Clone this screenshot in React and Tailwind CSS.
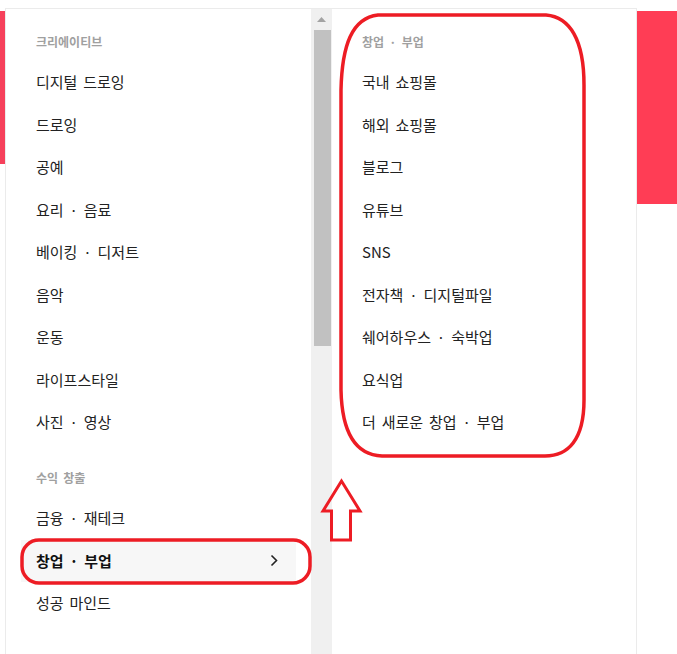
import React from 'react';

const creative = ['디지털 드로잉', '드로잉', '공예', '요리 · 음료', '베이킹 · 디저트', '음악', '운동', '라이프스타일', '사진 · 영상'];
const income = ['금융 · 재테크', '창업 · 부업', '성공 마인드'];
const sideJobs = ['국내 쇼핑몰', '해외 쇼핑몰', '블로그', '유튜브', 'SNS', '전자책 · 디지털파일', '쉐어하우스 · 숙박업', '요식업', '더 새로운 창업 · 부업'];

const GroupTitle = ({ children, className = '' }) => (
  <div className={`h-[18px] flex items-center px-[30px] text-[12px] font-bold text-[#a0a0a0] ${className}`}>{children}</div>
);

const Item = ({ label, active }) => (
  <div className={`h-[42.5px] mx-[15px] px-[15px] flex items-center justify-between text-[15px] ${active ? 'bg-[#f7f7f7] font-bold text-[#111]' : 'text-[#222]'}`}>
    <span>{label}</span>
    {active && (
      <svg width="8" height="13" viewBox="0 0 8 13" fill="none" className="mr-[3px]">
        <path d="M1.5 1.5 L6.5 6.5 L1.5 11.5" stroke="#222" strokeWidth="1.6" />
      </svg>
    )}
  </div>
);

export default function App() {
  return (
    <div className="relative w-[677px] h-[654px] overflow-hidden bg-white [word-spacing:2.5px]" style={{ fontFamily: '"Noto Sans CJK KR", "Noto Sans", sans-serif' }}>
      <div className="flex items-start pt-[8px]">
        {/* page content peeking out behind the dropdown */}
        <div className="w-[5px] h-[153px] mt-[3px] bg-[#f6405b]" />

        {/* dropdown panel */}
        <div className="flex h-[700px] border-t border-l border-r border-[#ebebeb] bg-white">
          {/* first level */}
          <div className="w-[305px] pt-[24px]">
            <GroupTitle className="mb-[10px]">크리에이티브</GroupTitle>
            {creative.map((c) => (
              <Item key={c} label={c} />
            ))}
            <GroupTitle className="mt-[25px] mb-[10.5px]">수익 창출</GroupTitle>
            {income.map((c) => (
              <Item key={c} label={c} active={c === '창업 · 부업'} />
            ))}
            <GroupTitle className="mt-[26px]">직무</GroupTitle>
          </div>

          {/* scrollbar */}
          <div className="w-[21px] bg-[#f0f0f0] flex flex-col items-center">
            <div className="h-[21px] flex items-center justify-center">
              <svg width="9" height="5" viewBox="0 0 9 5">
                <path d="M0 5 L4.5 0 L9 5 Z" fill="#a3a3a3" />
              </svg>
            </div>
            <div className="w-[17px] h-[316px] bg-[#c1c1c1] ml-[1px]" />
          </div>

          {/* second level */}
          <div className="w-[304px] pt-[24px]">
            <GroupTitle className="mb-[10px]">창업 · 부업</GroupTitle>
            {sideJobs.map((c) => (
              <Item key={c} label={c} />
            ))}
          </div>
        </div>

        <div className="flex-1 h-[193px] mt-[3px] bg-[#ff3d55]" />
      </div>

      {/* hand-drawn annotations */}
      <svg className="absolute left-0 top-0 pointer-events-none" width="677" height="654" viewBox="0 0 677 654" fill="none">
        <path
          d="M378 15 L546 15 C570 17 584 40 584 85 L584 400 C584 440 568 456 545 456 L382 456 C358 455 342 437 341 390 L341 90 C342 45 352 18 378 15 Z"
          stroke="#ed1c24"
          strokeWidth="3.5"
        />
        <rect x="22" y="540" width="288" height="43" rx="17" stroke="#ed1c24" strokeWidth="3.5" />
        <path d="M341.5 481 L323 511 L331.5 511 L331.5 540 L350.5 540 L350.5 511 L360 511 Z" stroke="#ed1c24" strokeWidth="3" strokeLinejoin="miter" />
      </svg>
    </div>
  );
}
